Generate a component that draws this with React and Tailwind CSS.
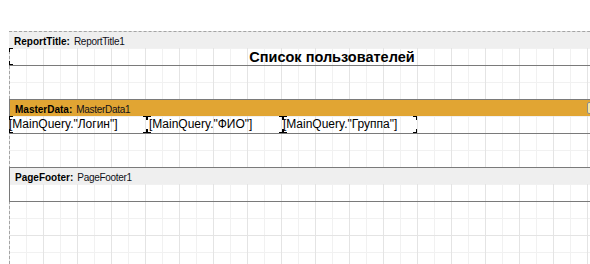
import React from "react";

const gridBg =
  "[background-image:linear-gradient(to_right,#e4e4e4_1px,transparent_1px),linear-gradient(to_bottom,#e4e4e4_1px,transparent_1px),linear-gradient(to_right,#f1f1f1_1px,transparent_1px),linear-gradient(to_bottom,#f1f1f1_1px,transparent_1px)] [background-size:34px_34px,34px_34px,17px_17px,17px_17px] bg-origin-border";

function Corners({ right = true }) {
  return (
    <>
      <span className="absolute left-0 top-0 w-[4px] h-[4px] border-l border-t border-black" />
      <span className="absolute left-0 bottom-0 w-[4px] h-[4px] border-l border-b border-black" />
      {right && (
        <>
          <span className="absolute right-0 top-0 w-[4px] h-[4px] border-r border-t border-black" />
          <span className="absolute right-0 bottom-0 w-[4px] h-[4px] border-r border-b border-black" />
        </>
      )}
    </>
  );
}

function BandHeader({ kind, name, color = "bg-[#efefef]", children }) {
  return (
    <div className={`relative h-[16px] pl-[5px] leading-[15px] whitespace-nowrap ${color}`}>
      <span className="text-[10px] font-bold text-black">{kind}:</span>
      <span className="ml-[4px] text-[10px] tracking-[-0.3px] text-[#101018]">{name}</span>
      {children}
    </div>
  );
}

function Field({ text, width, pad }) {
  return (
    <div className={`relative h-[17px] ${width}`}>
      <Corners />
      <div className={`text-[12px] leading-[17px] text-black whitespace-nowrap ${pad}`}>{text}</div>
    </div>
  );
}

export default function App() {
  return (
    <div className="w-[590px] h-[264px] overflow-hidden bg-white font-['Liberation_Sans',Arial,sans-serif]">
      <div className="h-[31px]" />
      <div className="flex">
        <div className="w-[9px] shrink-0" />
        <div className={`w-[646px] h-[233px] shrink-0 border-l border-t border-dashed border-[#a4a4a4] ${gridBg}`}>
          {/* ReportTitle */}
          <div className="-ml-px">
            <BandHeader kind="ReportTitle" name="ReportTitle1" />
            <div className="relative h-[17px]">
              <Corners right={false} />
              <div className="text-center text-[14.5px] font-bold leading-[17px] pt-px text-black">
                Список пользователей
              </div>
            </div>
            <div className="h-px bg-[#7a7a7a]" />
          </div>

          <div className="h-[33px]" />

          {/* MasterData */}
          <div className="-ml-px border-l border-t border-b border-[#7a7a7a]">
            <BandHeader kind="MasterData" name="MasterData1" color="bg-[#e1a533]">
              <span className="absolute left-[577px] top-[2px] w-[12px] h-[12px] rounded-[2px] border border-[#8c8c8c] bg-[#f4e6a6]" />
            </BandHeader>
            <div className="flex -ml-px">
              <Field text={'[MainQuery."Логин"]'} width="w-[138px]" pad="pl-0" />
              <Field text={'[MainQuery."ФИО"]'} width="w-[136px]" pad="pl-[2px]" />
              <Field text={'[MainQuery."Группа"]'} width="w-[134px]" pad="pl-0" />
            </div>
          </div>

          <div className="h-[33px]" />

          {/* PageFooter */}
          <div className="-ml-px border-l border-t border-b border-[#7a7a7a]">
            <BandHeader kind="PageFooter" name="PageFooter1" />
            <div className="h-[17px]" />
          </div>
        </div>
      </div>
    </div>
  );
}
